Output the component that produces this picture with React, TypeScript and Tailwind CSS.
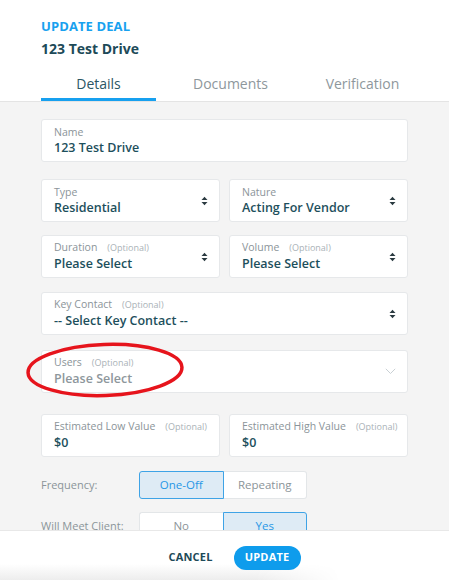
import React from "react";

const SortIcon = () => (
  <svg width="7" height="10" viewBox="0 0 7 10" className="shrink-0">
    <path d="M0.5 4 L3.5 0.8 L6.5 4 Z" fill="#2a3a40" />
    <path d="M0.5 6 L3.5 9.2 L6.5 6 Z" fill="#2a3a40" />
  </svg>
);

const Chevron = () => (
  <svg width="11" height="7" viewBox="0 0 11 7" className="shrink-0">
    <path d="M0.8 0.8 L5.5 5.5 L10.2 0.8" fill="none" stroke="#c9d0d4" strokeWidth="1" />
  </svg>
);

const Field = ({
  label,
  value,
  optional,
  icon,
  muted,
}: {
  label: string;
  value: string;
  optional?: boolean;
  icon?: React.ReactNode;
  muted?: boolean;
}) => (
  <div className="h-[43px] bg-white border border-[#e6e8ea] rounded-[3px] flex items-center pl-[12px] pr-[11px]">
    <div className="flex-1 min-w-0 flex flex-col">
      <div className="flex items-baseline whitespace-nowrap">
        <span className="text-[10.5px] leading-[14px] text-[#8b9499]">{label}</span>
        {optional && <span className="ml-[10px] text-[9px] leading-[14px] text-[#aab2b7]">(Optional)</span>}
      </div>
      <div
        className={
          "text-[12.5px] leading-[18px] font-semibold whitespace-nowrap " +
          (muted ? "text-[#8e979c]" : "text-[#1d4f5c]")
        }
      >
        {value}
      </div>
    </div>
    {icon}
  </div>
);

const Toggle = ({ left, right, active }: { left: string; right: string; active: "left" | "right" }) => (
  <div className="flex h-[28px] w-[168px]">
    <div
      className={
        "flex-1 flex items-center justify-center text-[11.5px] rounded-l-[3px] border " +
        (active === "left"
          ? "bg-[#deebf5] border-[#3ea3e6] text-[#2797e6]"
          : "bg-white border-[#e3e6e8] border-r-0 text-[#8b9499]")
      }
    >
      {left}
    </div>
    <div
      className={
        "flex-1 flex items-center justify-center text-[11.5px] rounded-r-[3px] border " +
        (active === "right"
          ? "bg-[#deebf5] border-[#3ea3e6] text-[#2797e6]"
          : "bg-white border-[#e3e6e8] border-l-0 text-[#8b9499]")
      }
    >
      {right}
    </div>
  </div>
);

export default function App() {
  return (
    <div
      className="relative w-[449px] h-[580px] flex flex-col overflow-hidden bg-[#f4f4f4]"
      style={{ fontFamily: '"Open Sans", "Noto Sans", sans-serif' }}
    >
      {/* Header */}
      <div className="bg-white border-b border-[#e4e4e4] pl-[41px] pt-[17px]">
        <div className="text-[13px] leading-[18px] font-bold text-[#18a1ef] tracking-[0.1px]">UPDATE DEAL</div>
        <div className="mt-[4px] text-[14px] leading-[20px] font-bold text-[#1d4a58]">123 Test Drive</div>
        <div className="mt-[15px] flex gap-[17px]">
          <div className="w-[115px] flex flex-col items-center">
            <div className="text-[14px] leading-[20px] text-[#2b5664]">Details</div>
            <div className="mt-[4px] h-[3px] w-full bg-[#17a0ef]" />
          </div>
          <div className="w-[115px] flex flex-col items-center">
            <div className="text-[14px] leading-[20px] text-[#8e979c]">Documents</div>
            <div className="mt-[4px] h-[3px] w-full" />
          </div>
          <div className="w-[115px] flex flex-col items-center">
            <div className="text-[14px] leading-[20px] text-[#8e979c]">Verification</div>
            <div className="mt-[4px] h-[3px] w-full" />
          </div>
        </div>
      </div>

      {/* Body */}
      <div className="flex-1 overflow-hidden pl-[41px] pr-[41px] pt-[17px]">
        <Field label="Name" value="123 Test Drive" />
        <div className="mt-[17px] grid grid-cols-2 gap-x-[9px] gap-y-[13px]">
          <Field label="Type" value="Residential" icon={<SortIcon />} />
          <Field label="Nature" value="Acting For Vendor" icon={<SortIcon />} />
          <Field label="Duration" optional value="Please Select" icon={<SortIcon />} />
          <Field label="Volume" optional value="Please Select" icon={<SortIcon />} />
        </div>
        <div className="mt-[14px]">
          <Field label="Key Contact" optional value="-- Select Key Contact --" icon={<SortIcon />} />
        </div>
        <div className="mt-[15px]">
          <Field label="Users" optional value="Please Select" muted icon={<Chevron />} />
        </div>
        <div className="mt-[21px] grid grid-cols-2 gap-x-[9px]">
          <Field label="Estimated Low Value" optional value="$0" />
          <Field label="Estimated High Value" optional value="$0" />
        </div>
        <div className="mt-[14px] flex items-center">
          <div className="w-[98px] text-[11px] text-[#8b9499]">Frequency:</div>
          <Toggle left="One-Off" right="Repeating" active="left" />
        </div>
        <div className="mt-[13px] flex items-center">
          <div className="w-[98px] text-[11px] text-[#8b9499] whitespace-nowrap">Will Meet Client:</div>
          <Toggle left="No" right="Yes" active="right" />
        </div>
      </div>

      {/* Footer */}
      <div className="relative h-[50px] shrink-0 bg-white border-t border-[#e8e8e8] flex items-center justify-center gap-[21px] pl-[20px] pt-[4px]">
        <div className="absolute left-0 bottom-0 h-[16px] w-[340px] bg-gradient-to-b from-white to-[#ededed] [mask-image:linear-gradient(to_right,black_75%,transparent)]" />
        <span className="relative text-[11px] font-bold text-[#1d4a58] tracking-[0.2px]">CANCEL</span>
        <span className="relative h-[24px] w-[67px] rounded-full bg-[#0e9cec] flex items-center justify-center text-[11px] font-bold text-white tracking-[0.2px]">
          UPDATE
        </span>
      </div>

      {/* Red annotation ellipse */}
      <svg className="absolute left-0 top-0 pointer-events-none" width="449" height="580">
        <ellipse cx="105" cy="370" rx="77" ry="25.5" fill="none" stroke="#e6141c" strokeWidth="3.5" transform="rotate(-2 105 370)" />
      </svg>
    </div>
  );
}
